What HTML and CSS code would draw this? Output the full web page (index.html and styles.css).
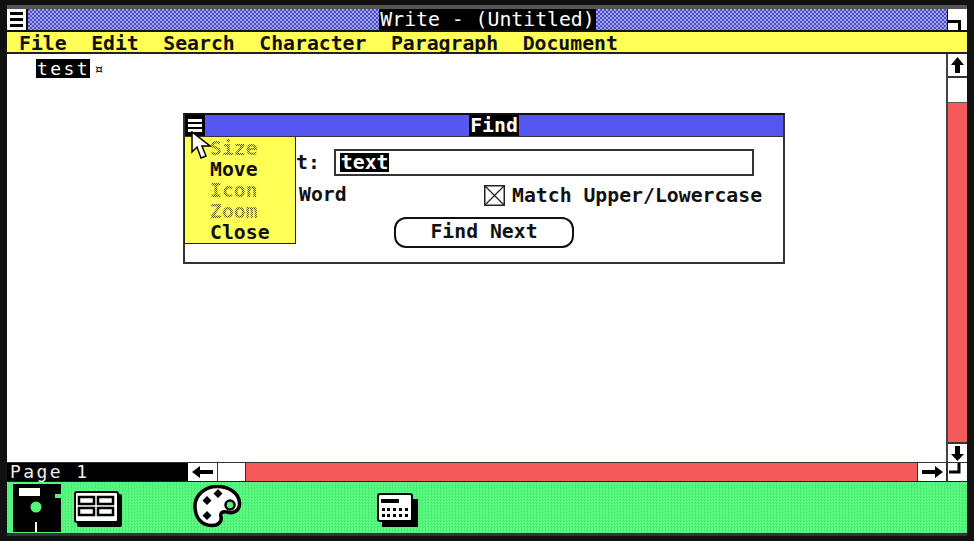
FILE: index.html
```html
<!DOCTYPE html>
<html lang="en">
<head>
    <meta charset="UTF-8">
    <title>Write - (Untitled)</title>
    <link rel="stylesheet" href="styles.css">
</head>
<body>
<div class="screen">
    <!--title bar-->
    <div class="titlebar">
        <div class="sysbox"><span></span><span></span><span></span></div>
        <div class="caption"><span>Write - (Untitled)</span></div>
        <div class="sizebox">
            <svg width="20" height="21" viewBox="0 0 20 21"><path d="M0 12.5h11.5v8.5" fill="none" stroke="#000" stroke-width="3"/></svg>
        </div>
    </div>
    <!--menu-->
    <div class="menubar">
        <span>File</span><span>Edit</span><span>Search</span><span>Character</span><span>Paragraph</span><span>Document</span>
    </div>

    <div class="workarea">
        <div class="doc">
            <div class="docline"><span class="selected">test</span><span class="para">¤</span></div>
        </div>
        <div class="vscroll">
            <div class="arrow up">
                <svg width="19" height="22" viewBox="0 0 19 22"><path d="M9.5 3l6.5 8h-4v8h-5v-8h-4z"/></svg>
            </div>
            <div class="vthumb"></div>
            <div class="vtrack"></div>
            <div class="arrow down">
                <svg width="19" height="18" viewBox="0 0 19 18"><path d="M9.5 17l-6.5-7h4v-8h5v8h4z"/></svg>
            </div>
        </div>
    </div>

    <div class="statusbar">
        <div class="pageno">Page 1</div>
        <div class="harrow">
            <svg width="28" height="18" viewBox="0 0 28 18"><path d="M4 9l8-6v4h13v4h-13v4z"/></svg>
        </div>
        <div class="hthumb"></div>
        <div class="htrack"></div>
        <div class="harrow right">
            <svg width="28" height="18" viewBox="0 0 28 18"><path d="M25 9l-8-6v4h-13v4h13v4z"/></svg>
        </div>
        <div class="corner">
            <svg width="20" height="18" viewBox="0 0 20 18"><path d="M1 9h10v-9" fill="none" stroke="#000" stroke-width="3"/></svg>
        </div>
    </div>

    <!--icons along the bottom-->
    <div class="desktop">
        <svg class="icon-disk" width="48" height="48" viewBox="0 0 48 48">
            <rect width="48" height="48"/>
            <rect x="6" y="4" width="21" height="8" fill="#fff"/>
            <rect x="42" y="10" width="6" height="4" fill="#55f57c"/>
            <circle cx="23" cy="23" r="5.5" fill="#55f57c"/>
            <rect x="22" y="38" width="2" height="10" fill="#fff"/>
        </svg>
        <svg class="icon-cards" width="48" height="36" viewBox="0 0 48 36">
            <rect x="3" y="3" width="45" height="33" rx="2"/>
            <rect x="1" y="1" width="43" height="30" rx="2" fill="#fff" stroke="#000" stroke-width="2"/>
            <g fill="#fff" stroke="#000" stroke-width="2.5">
                <rect x="5" y="6" width="15" height="7"/><rect x="24" y="6" width="15" height="7"/>
                <rect x="5" y="17" width="15" height="7"/><rect x="24" y="17" width="15" height="7"/>
            </g>
        </svg>
        <svg class="icon-palette" width="50" height="43" viewBox="0 0 50 43">
            <path d="M24 1.5c12 0 22 6.500 22.500 16.500 .5 8-6.500 11-12.500 9-5-1-7 1-6 5 1 4-2 8.500-9 8.500-11 0-17-8.500-17-19.500s10-19.500 22-19.500z" fill="#fff" stroke="#000" stroke-width="3.500"/>
            <path d="M14 11l4.500 4.500-4.500 4.500-4.500-4.500zM25 4l4.500 4.500-4.500 4.500-4.500-4.500zM14 26l4.500 4.500-4.500 4.500-4.500-4.500z"/>
            <circle cx="37" cy="20" r="4.500" fill="#55f57c" stroke="#000" stroke-width="2.500"/>
        </svg>
        <svg class="icon-calc" width="42" height="35" viewBox="0 0 42 35">
            <path d="M5 6h36v28h-36z"/>
            <rect x="1" y="1" width="34" height="27" rx="2" fill="#fff" stroke="#000" stroke-width="2"/>
            <rect x="4" y="6" width="18" height="4"/>
            <g>
                <rect x="5" y="15" width="3" height="3"/><rect x="10" y="15" width="3" height="3"/><rect x="16" y="15" width="3" height="3"/><rect x="22" y="15" width="3" height="3"/><rect x="28" y="15" width="3" height="3"/>
                <rect x="5" y="21" width="3" height="3"/><rect x="10" y="21" width="3" height="3"/><rect x="16" y="21" width="3" height="3"/><rect x="22" y="21" width="3" height="3"/><rect x="28" y="21" width="3" height="3"/>
            </g>
        </svg>
    </div>

    <!--Find dialog, a window lying over the document-->
    <div class="dialog">
        <div class="dlgtitle">
            <div class="dlgsys"><span></span><span></span><span></span></div>
            <div class="dlgcaption"><span>Find</span></div>
        </div>
        <div class="dlgbody">
            <div class="findrow">
                <span class="findlabel">t:</span>
                <div class="findbox"><span class="selected">text</span></div>
            </div>
            <div class="optrow">
                <span class="wholeword">Word</span>
                <span class="matchcase">
                    <svg width="21" height="21" viewBox="0 0 21 21"><rect x="0.75" y="0.75" width="19.5" height="19.5" fill="#fff" stroke="#222" stroke-width="1.5"/><path d="M1 1l19 19M20 1l-19 19" stroke="#222" stroke-width="1.2"/></svg>
                    Match Upper/Lowercase
                </span>
            </div>
            <div class="btnrow"><div class="button">Find Next</div></div>
        </div>

        <!--open system menu-->
        <div class="sysmenu">
            <div class="off">Size</div>
            <div>Move</div>
            <div class="off">Icon</div>
            <div class="off">Zoom</div>
            <div>Close</div>
        </div>
        <svg class="cursor" width="21" height="29" viewBox="0 0 21 29">
            <path d="M1 1v20l5-5 4 11 5-2-4-10h8z" fill="#fff" stroke="#000" stroke-width="1.500"/>
        </svg>
    </div>
</div>
</body>
</html>
```
FILE: styles.css
```css
* {
    box-sizing: border-box;
}

html, body {
    margin: 0;
    height: 541px;
    overflow: hidden;
    background-color: #111;
}

body {
    font-family: "DejaVu Sans Mono", "Liberation Mono", monospace;
    font-size: 19.8px;
    font-weight: bold;
    color: #111;
}

.screen {
    position: relative;
    width: 960px;
    height: 531px;
    margin: 5px 0 0 7px;
    display: flex;
    flex-direction: column;
    border-top: 4px solid #555;
    background-color: #fff;
}

/* title bar */
.titlebar {
    display: flex;
    height: 23px;
    border-bottom: 2px solid #111;
}

.sysbox {
    width: 21px;
    display: flex;
    flex-direction: column;
    justify-content: center;
    gap: 3px;
    padding: 0 3px;
    background-color: #fff;
    border-right: 2px solid #111;
}

.sysbox span {
    height: 3px;
    background-color: #000;
}

.caption {
    flex: 1;
    text-align: center;
    line-height: 21px;
    color: #fff;
    background-color: #6a6ad8;
    background-image: repeating-conic-gradient(#9fa2f0 0 25%, #4f4fc4 0 50%);
    background-size: 4px 4px;
}

.caption span {
    display: inline-block;
    padding: 0 1px;
    background-color: #000;
    font-weight: normal;
}

.sizebox {
    width: 20px;
    background-color: #fff;
    border-left: 1px solid #111;
}

.sizebox svg {
    display: block;
}

/* menu */
.menubar {
    display: flex;
    gap: 24.5px;
    height: 22px;
    padding-left: 12px;
    line-height: 24px;
    background-color: #ffff55;
    border-bottom: 2px solid #222;
}

/* document + vertical scrollbar */
.workarea {
    flex: 1;
    display: flex;
    min-height: 0;
}

.doc {
    flex: 1;
    padding: 5px 0 0 29px;
}

.docline {
    display: flex;
    align-items: center;
    font-size: 18px;
    font-weight: normal;
    line-height: 19px;
}

.selected {
    background-color: #000;
    color: #fff;
}

.docline .selected {
    letter-spacing: 2.4px;
    padding-left: 1px;
}

.para {
    font-size: 16px;
    margin-left: 4px;
}

.vscroll {
    width: 21px;
    display: flex;
    flex-direction: column;
    border-left: 2px solid #444;
}

.arrow {
    height: 24px;
    background-color: #fff;
    border-bottom: 2px solid #333;
}

.arrow svg {
    display: block;
}

.arrow.down {
    height: 20px;
    border-bottom: 0;
    border-top: 2px solid #333;
}

.vthumb {
    height: 25px;
    background-color: #fff;
    border-bottom: 1px solid #555;
}

.vtrack {
    flex: 1;
    background-color: #f55a5a;
}

/* status bar + horizontal scrollbar */
.statusbar {
    display: flex;
    height: 20px;
    background-color: #fff;
    border-top: 1px solid #333;
    border-bottom: 1px solid #222;
}

.pageno {
    width: 181px;
    padding-left: 3px;
    background-color: #000;
    color: #eee;
    font-size: 18px;
    font-weight: normal;
    letter-spacing: 2.4px;
    line-height: 18px;
}

.harrow {
    width: 30px;
    border-right: 1px solid #333;
}

.harrow.right {
    width: 31px;
    border-right: 2px solid #333;
    border-left: 1px solid #333;
}

.harrow svg {
    display: block;
}

.hthumb {
    width: 28px;
    border-right: 1px solid #333;
}

.htrack {
    flex: 1;
    background-color: #f55a5a;
}

.corner {
    width: 19px;
}

.corner svg {
    display: block;
}

/* icon strip */
.desktop {
    height: 54px;
    display: flex;
    align-items: flex-start;
    background-color: #55f57c;
    background-image: repeating-conic-gradient(#4eec74 0 25%, #5cff84 0 50%);
    background-size: 3px 3px;
    border-bottom: 3px solid #333;
}

.desktop svg {
    display: block;
    flex: none;
}

.icon-disk {
    margin: 2px 0 0 6px;
}

.icon-cards {
    margin: 9px 0 0 13px;
}

.icon-palette {
    margin: 3px 0 0 71px;
}

.icon-calc {
    margin: 11px 0 0 134px;
}

/* Find dialog */
.dialog {
    position: absolute;
    left: 176px;
    top: 104px;
    width: 602px;
    height: 151px;
    background-color: #fff;
    border: 2px solid #333;
    border-top-color: #111;
}

.dlgtitle {
    display: flex;
    height: 22px;
    background-color: #5656f0;
    border-bottom: 1px solid #333;
}

.dlgsys {
    width: 20px;
    display: flex;
    flex-direction: column;
    justify-content: center;
    gap: 2px;
    padding: 0 3px;
    background-color: #000;
}

.dlgsys span {
    height: 3px;
    background-color: #fff;
}

.dlgcaption {
    flex: 1;
    text-align: center;
    line-height: 19px;
    color: #fff;
}

.dlgcaption span {
    display: inline-block;
    background-color: #000;
    padding: 1px 1px;
}

.dlgbody {
    padding-top: 12px;
}

.findrow {
    display: flex;
    gap: 14px;
    height: 27px;
    padding-left: 111px;
    line-height: 27px;
}

.findbox {
    width: 420px;
    height: 27px;
    padding: 2px 0 0 4px;
    border: 2px solid #333;
}

.findbox .selected {
    display: inline-block;
    padding: 0 1px;
    line-height: 19px;
    vertical-align: top;
}

.optrow {
    display: flex;
    margin-top: 8px;
    height: 22px;
    line-height: 21px;
}

.wholeword {
    padding-left: 114px;
    width: 299px;
}

.matchcase {
    display: flex;
    align-items: center;
    gap: 7px;
}

.btnrow {
    display: flex;
    justify-content: center;
    margin-top: 11px;
}

.button {
    width: 180px;
    height: 31px;
    text-align: center;
    line-height: 26px;
    border: 2px solid #111;
    border-radius: 12px;
}

.sysmenu {
    position: absolute;
    left: -1px;
    top: 22px;
    width: 112px;
    height: 107px;
    padding: 1px 0 0 25px;
    line-height: 21px;
    background-color: #ffff55;
    border: 1px solid #222;
    border-top: 0;
}

.sysmenu .off {
    color: transparent;
    background-image: repeating-conic-gradient(#55551a 0 25%, #f0f060 0 50%);
    background-size: 2px 2px;
    -webkit-background-clip: text;
    background-clip: text;
}

.cursor {
    position: absolute;
    left: 6px;
    top: 16px;
}
```
